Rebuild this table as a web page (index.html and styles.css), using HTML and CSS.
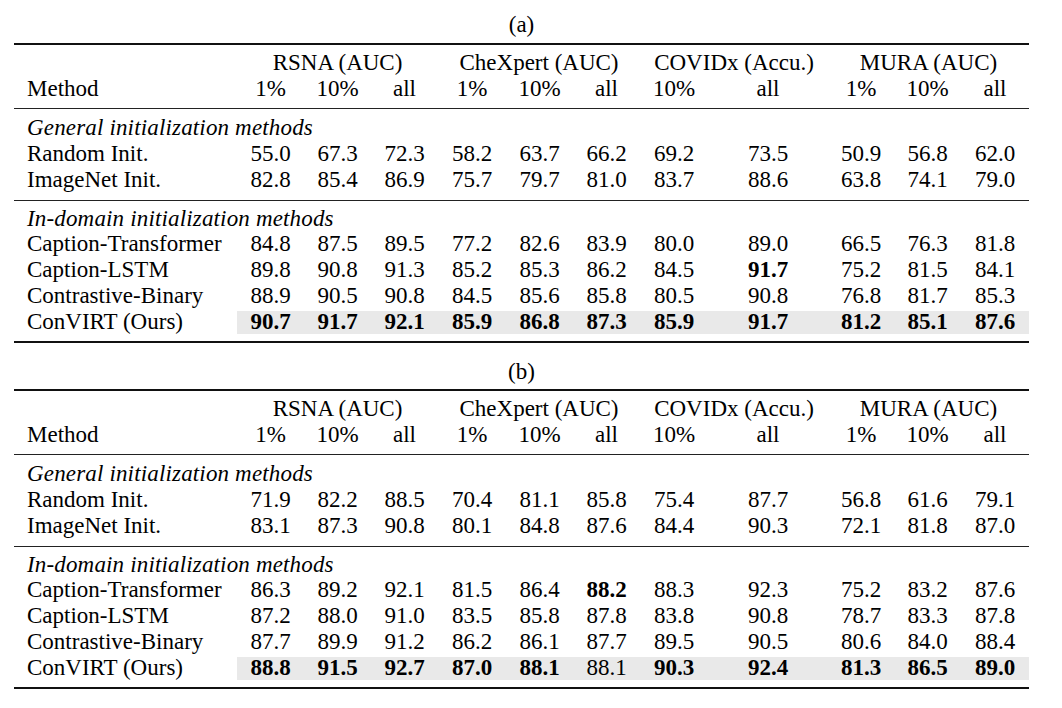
FILE: index.html
```html
<!DOCTYPE html>
<html>
<head>
<meta charset="utf-8">
<link rel="stylesheet" href="styles.css">
</head>
<body>
<div class="page">
  <div class="caption">(a)</div>
  <div class="table">
    <div class="sec head">
      <div class="row">
        <div></div>
        <div class="grp g3">RSNA (AUC)</div>
        <div class="grp g3">CheXpert (AUC)</div>
        <div class="grp g2">COVIDx (Accu.)</div>
        <div class="grp g3">MURA (AUC)</div>
      </div>
      <div class="row">
        <div class="m">Method</div>
        <div>1%</div><div>10%</div><div>all</div>
        <div>1%</div><div>10%</div><div>all</div>
        <div>10%</div><div>all</div>
        <div>1%</div><div>10%</div><div>all</div>
      </div>
    </div>
    <div class="sec g-a">
      <div class="label">General initialization methods</div>
      <div class="row"><div class="m">Random Init.</div><div>55.0</div><div>67.3</div><div>72.3</div><div>58.2</div><div>63.7</div><div>66.2</div><div>69.2</div><div>73.5</div><div>50.9</div><div>56.8</div><div>62.0</div></div>
      <div class="row"><div class="m">ImageNet Init.</div><div>82.8</div><div>85.4</div><div>86.9</div><div>75.7</div><div>79.7</div><div>81.0</div><div>83.7</div><div>88.6</div><div>63.8</div><div>74.1</div><div>79.0</div></div>
    </div>
    <div class="sec g-b last">
      <div class="label">In-domain initialization methods</div>
      <div class="row"><div class="m">Caption-Transformer</div><div>84.8</div><div>87.5</div><div>89.5</div><div>77.2</div><div>82.6</div><div>83.9</div><div>80.0</div><div>89.0</div><div>66.5</div><div>76.3</div><div>81.8</div></div>
      <div class="row"><div class="m">Caption-LSTM</div><div>89.8</div><div>90.8</div><div>91.3</div><div>85.2</div><div>85.3</div><div>86.2</div><div>84.5</div><div class="b">91.7</div><div>75.2</div><div>81.5</div><div>84.1</div></div>
      <div class="row"><div class="m">Contrastive-Binary</div><div>88.9</div><div>90.5</div><div>90.8</div><div>84.5</div><div>85.6</div><div>85.8</div><div>80.5</div><div>90.8</div><div>76.8</div><div>81.7</div><div>85.3</div></div>
      <div class="row ours"><div class="m">ConVIRT (Ours)</div><div class="b">90.7</div><div class="b">91.7</div><div class="b">92.1</div><div class="b">85.9</div><div class="b">86.8</div><div class="b">87.3</div><div class="b">85.9</div><div class="b">91.7</div><div class="b">81.2</div><div class="b">85.1</div><div class="b">87.6</div></div>
    </div>
  </div>

  <div class="caption second">(b)</div>
  <div class="table">
    <div class="sec head">
      <div class="row">
        <div></div>
        <div class="grp g3">RSNA (AUC)</div>
        <div class="grp g3">CheXpert (AUC)</div>
        <div class="grp g2">COVIDx (Accu.)</div>
        <div class="grp g3">MURA (AUC)</div>
      </div>
      <div class="row">
        <div class="m">Method</div>
        <div>1%</div><div>10%</div><div>all</div>
        <div>1%</div><div>10%</div><div>all</div>
        <div>10%</div><div>all</div>
        <div>1%</div><div>10%</div><div>all</div>
      </div>
    </div>
    <div class="sec g-a">
      <div class="label">General initialization methods</div>
      <div class="row"><div class="m">Random Init.</div><div>71.9</div><div>82.2</div><div>88.5</div><div>70.4</div><div>81.1</div><div>85.8</div><div>75.4</div><div>87.7</div><div>56.8</div><div>61.6</div><div>79.1</div></div>
      <div class="row"><div class="m">ImageNet Init.</div><div>83.1</div><div>87.3</div><div>90.8</div><div>80.1</div><div>84.8</div><div>87.6</div><div>84.4</div><div>90.3</div><div>72.1</div><div>81.8</div><div>87.0</div></div>
    </div>
    <div class="sec g-b last">
      <div class="label">In-domain initialization methods</div>
      <div class="row"><div class="m">Caption-Transformer</div><div>86.3</div><div>89.2</div><div>92.1</div><div>81.5</div><div>86.4</div><div class="b">88.2</div><div>88.3</div><div>92.3</div><div>75.2</div><div>83.2</div><div>87.6</div></div>
      <div class="row"><div class="m">Caption-LSTM</div><div>87.2</div><div>88.0</div><div>91.0</div><div>83.5</div><div>85.8</div><div>87.8</div><div>83.8</div><div>90.8</div><div>78.7</div><div>83.3</div><div>87.8</div></div>
      <div class="row"><div class="m">Contrastive-Binary</div><div>87.7</div><div>89.9</div><div>91.2</div><div>86.2</div><div>86.1</div><div>87.7</div><div>89.5</div><div>90.5</div><div>80.6</div><div>84.0</div><div>88.4</div></div>
      <div class="row ours"><div class="m">ConVIRT (Ours)</div><div class="b">88.8</div><div class="b">91.5</div><div class="b">92.7</div><div class="b">87.0</div><div class="b">88.1</div><div>88.1</div><div class="b">90.3</div><div class="b">92.4</div><div class="b">81.3</div><div class="b">86.5</div><div class="b">89.0</div></div>
    </div>
  </div>
</div>
</body>
</html>
```

FILE: styles.css
```css
html, body {
  margin: 0;
  padding: 0;
  background: #ffffff;
}

.page {
  padding-top: 12px;
  padding-left: 14px;
  width: 1015px;
  font-family: "Liberation Serif", "Times New Roman", serif;
  font-size: 23px;
  line-height: 25.75px;
  color: #000000;
}

.caption {
  text-align: center;
  height: 26px;
  line-height: 26px;
  margin-bottom: 5px;
}

.caption.second {
  margin-top: 16px;
  margin-bottom: 4px;
}

.table {
  border-top: 2px solid #111111;
  border-bottom: 2px solid #111111;
}

.sec {
  border-bottom: 1px solid #222222;
}

.sec.last {
  border-bottom: none;
}

.head {
  padding-top: 5px;
  padding-bottom: 6.5px;
}

.g-a {
  padding-top: 6px;
  padding-bottom: 7.25px;
}

.g-b {
  padding-top: 5px;
  padding-bottom: 4.75px;
}

.row {
  display: grid;
  grid-template-columns: 223px 67px 67px 67px 68px 67px 67px 68px 120px 66px 67px 68px;
  text-align: center;
  white-space: nowrap;
}

.row > .m {
  text-align: left;
  padding-left: 13px;
}

.grp.g3 {
  grid-column: span 3;
}

.grp.g2 {
  grid-column: span 2;
}

.label {
  font-style: italic;
  padding-left: 13px;
  letter-spacing: 0.16px;
  white-space: nowrap;
}

.b {
  font-weight: bold;
}

.ours {
  padding-bottom: 2px;
}

.ours > div:not(.m) {
  background: linear-gradient(#e9e9e9, #e9e9e9) 0 2px / 100% 100% no-repeat;
}
```
